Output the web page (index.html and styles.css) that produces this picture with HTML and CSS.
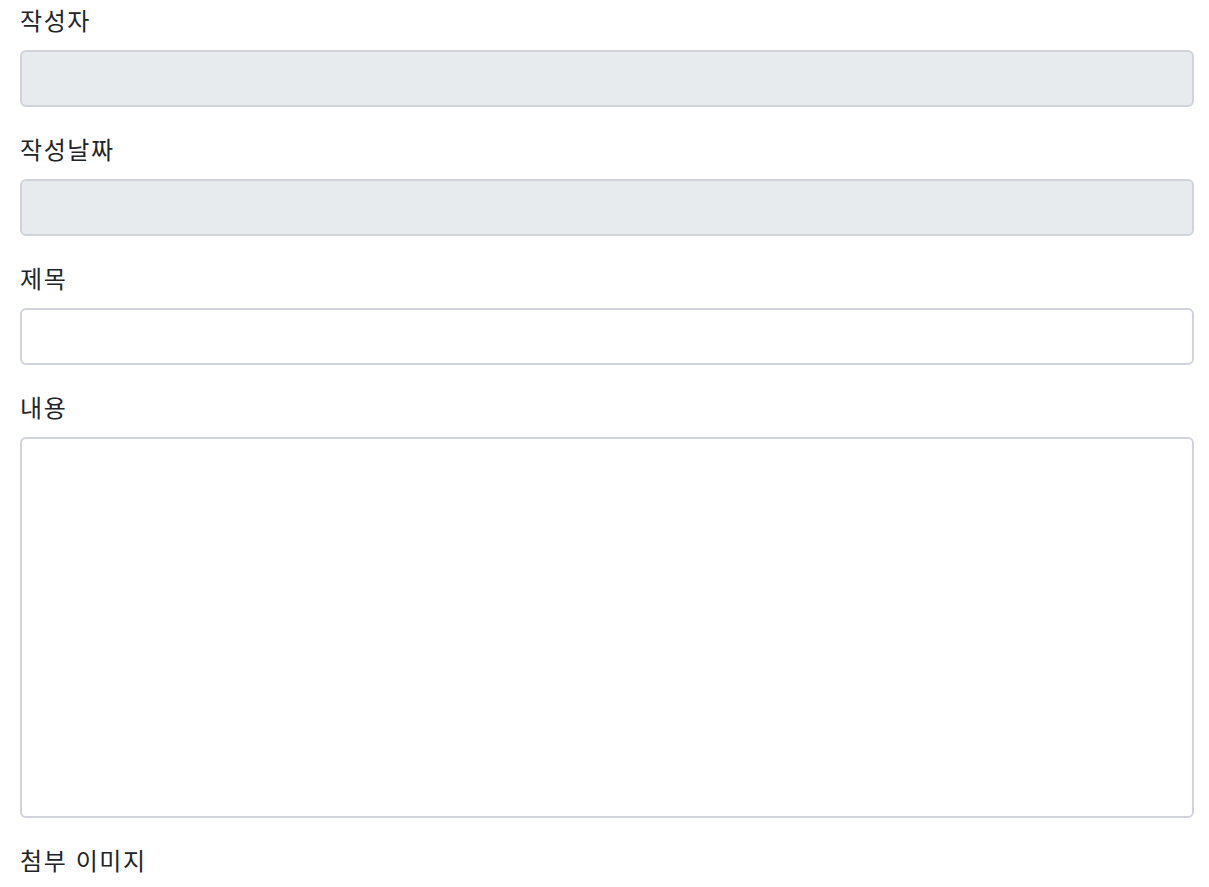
FILE: index.html
```html
<!DOCTYPE html>
<html lang="ko">
<head>
<meta charset="utf-8">
<link rel="stylesheet" href="styles.css">
</head>
<body>
<form class="form">
  <div class="group">
    <label class="label">작성자</label>
    <input class="control" type="text" disabled>
  </div>
  <div class="group">
    <label class="label">작성날짜</label>
    <input class="control" type="text" disabled>
  </div>
  <div class="group">
    <label class="label">제목</label>
    <input class="control" type="text">
  </div>
  <div class="group">
    <label class="label">내용</label>
    <textarea class="control area"></textarea>
  </div>
  <div class="group">
    <label class="label">첨부 이미지</label>
  </div>
</form>
</body>
</html>
```

FILE: styles.css
```css
html, body {
  margin: 0;
  padding: 0;
  background: #fff;
}
body {
  font-family: "Noto Sans CJK KR", "Noto Sans", sans-serif;
  font-size: 24px;
  line-height: 1.5;
  color: #212529;
  overflow: hidden;
}
.form {
  display: flex;
  flex-direction: column;
  padding: 2px 15px 0 20px;
}
.group {
  display: flex;
  flex-direction: column;
  margin-bottom: 24px;
}
.label {
  display: block;
  margin-bottom: 12px;
  height: 36px;
  line-height: 36px;
  letter-spacing: 1.6px;
}
.control {
  display: block;
  box-sizing: border-box;
  width: 100%;
  height: 57px;
  margin: 0;
  padding: 9px 18px;
  font: inherit;
  color: #495057;
  background: #fff;
  border: 2px solid #d0d4da;
  border-radius: 6px;
  outline: none;
}
.control:disabled {
  background: #e8ebee;
}
.area {
  height: 381px;
  resize: none;
}
```
